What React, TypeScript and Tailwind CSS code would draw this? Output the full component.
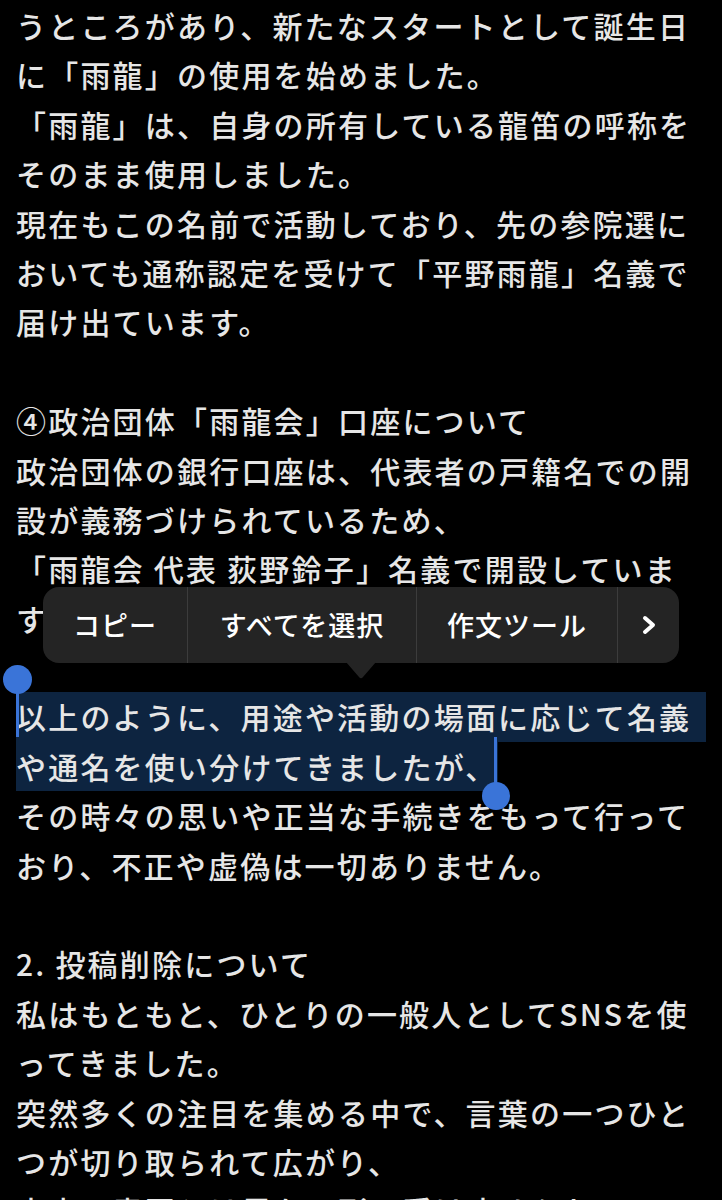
const before = [
    "うところがあり、新たなスタートとして誕生日",
    "に「雨龍」の使用を始めました。",
    "「雨龍」は、自身の所有している龍笛の呼称を",
    "そのまま使用しました。",
    "現在もこの名前で活動しており、先の参院選に",
    "おいても通称認定を受けて「平野雨龍」名義で",
    "届け出ています。",
    "",
    "④政治団体「雨龍会」口座について",
    "政治団体の銀行口座は、代表者の戸籍名での開",
    "設が義務づけられているため、",
    "「雨龍会 代表 荻野鈴子」名義で開設していま",
    "す。",
    "",
]

const after = [
    "その時々の思いや正当な手続きをもって行って",
    "おり、不正や虚偽は一切ありません。",
    "",
    "2. 投稿削除について",
    "私はもともと、ひとりの一般人としてSNSを使",
    "ってきました。",
    "突然多くの注目を集める中で、言葉の一つひと",
    "つが切り取られて広がり、",
    "本来の意図とは異なる形で受け止められるこ",
]

function Line({ text }: { text: string }) {
    return <div className="h-[49.4px] whitespace-pre">{text || " "}</div>
}

export default function App() {
    return (
        <div className="relative h-[1200px] w-[722px] overflow-hidden bg-black font-['Noto_Sans_CJK_JP','Noto_Sans',sans-serif] text-[#e6e6e6]">
            <div className="w-[706px] pl-[16px] pt-[1px] text-[30px] leading-[49.4px] tracking-[2.2px] font-medium">
                {before.map((t, i) => <Line key={"b" + i} text={t} />)}

                {/* selected lines */}
                <div className="h-[49.4px] whitespace-pre bg-[#0d2440]">以上のように、用途や活動の場面に応じて名義</div>
                <div className="h-[49.4px] whitespace-pre">
                    <span className="inline-block bg-[#0d2440]">や通名を使い分けてきましたが、</span>
                </div>

                {after.map((t, i) => <Line key={"a" + i} text={t} />)}
            </div>

            {/* selection handles */}
            <div className="absolute left-[3px] top-[665px] size-[29px] rounded-full bg-[#3a74d8]" />
            <div className="absolute left-[16px] top-[690px] h-[47px] w-[3px] bg-[#3a74d8]" />
            <div className="absolute left-[494px] top-[737px] h-[50px] w-[3px] bg-[#3a74d8]" />
            <div className="absolute left-[482px] top-[782px] size-[28px] rounded-full bg-[#3a74d8]" />

            {/* edit menu */}
            <div className="absolute left-[43px] top-[587px] flex h-[76px] w-[636px] rounded-[16px] bg-[#242424] text-[27px] font-medium tracking-[1px] text-white">
                <div className="flex w-[144px] items-center justify-center">コピー</div>
                <div className="w-px bg-[#3c3c3c]" />
                <div className="flex w-[228px] items-center justify-center">すべてを選択</div>
                <div className="w-px bg-[#3c3c3c]" />
                <div className="flex w-[200px] items-center justify-center">作文ツール</div>
                <div className="w-px bg-[#3c3c3c]" />
                <div className="flex flex-1 items-center justify-center">
                    <svg width="18" height="20" viewBox="0 0 18 20" fill="none">
                        <path d="M5 3 L13 10 L5 17" stroke="white" strokeWidth="4" strokeLinecap="round" strokeLinejoin="round" />
                    </svg>
                </div>
            </div>
            <svg className="absolute left-[346px] top-[662px]" width="30" height="18" viewBox="0 0 30 18">
                <path d="M0 0 L30 0 L17 15 Q15 17.5 13 15 Z" fill="#242424" />
            </svg>
        </div>
    )
}
